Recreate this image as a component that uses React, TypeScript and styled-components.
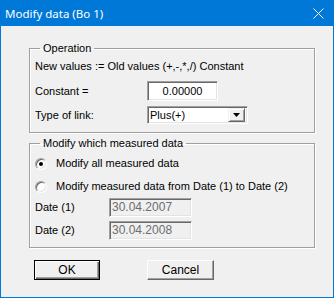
import styled, { createGlobalStyle } from "styled-components";

const Global = createGlobalStyle`
  body {
    margin: 0;
    background: #fff;
  }
`;

const Window = styled.div`
  width: 334px;
  height: 298px;
  box-sizing: border-box;
  background: #f0f0f0;
  border: 1px solid #0078d7;
  border-top: none;
  display: flex;
  flex-direction: column;
  font-family: "Liberation Sans", Arial, sans-serif;
  font-size: 11px;
  line-height: 13px;
  color: #000;
`;

const TitleBar = styled.div`
  height: 26px;
  flex: none;
  background: #0078d7;
  color: #fff;
  display: flex;
  align-items: center;
  justify-content: space-between;
  padding: 0 9px 0 4px;
  font-family: "Noto Sans", "Open Sans", sans-serif;
  font-size: 11.5px;
`;

const Body = styled.div`
  display: flex;
  flex-direction: column;
  padding: 16px 18px 0 28px;
`;

const Group = styled.fieldset<{ $top?: number; $padTop: number; $padBottom: number }>`
  margin: ${(p) => p.$top || 0}px 0 0;
  padding: ${(p) => p.$padTop}px 5px ${(p) => p.$padBottom}px;
  border: 1px solid #a0a0a0;
  box-shadow: 1px 1px 0 #fff, inset 1px 1px 0 #fff;
  min-width: 0;
  display: flex;
  flex-direction: column;
`;

const Legend = styled.legend`
  padding: 0 3px;
  margin-left: 5px;
  line-height: 13px;
`;

const Row = styled.div<{ $top?: number; $h: number }>`
  display: flex;
  align-items: center;
  height: ${(p) => p.$h}px;
  margin-top: ${(p) => p.$top || 0}px;
  white-space: nowrap;
`;

const Label = styled.span<{ $w: number }>`
  width: ${(p) => p.$w}px;
  flex: none;
`;

const Field = styled.div<{ $w: number; $h: number; $disabled?: boolean; $center?: boolean }>`
  box-sizing: border-box;
  width: ${(p) => p.$w}px;
  height: ${(p) => p.$h}px;
  border: 1px solid;
  border-color: #a0a0a0 #fff #fff #a0a0a0;
  box-shadow: inset 1px 1px 0 #696969, inset -1px -1px 0 #e3e3e3;
  background: ${(p) => (p.$disabled ? "#f0f0f0" : "#fff")};
  color: ${(p) => (p.$disabled ? "#6d6d6d" : "#000")};
  display: flex;
  align-items: center;
  justify-content: ${(p) => (p.$center ? "center" : "flex-start")};
  padding: 0 2px;
  font-size: ${(p) => (p.$disabled ? "12px" : "11px")};
`;

const Select = styled(Field)`
  justify-content: space-between;
  padding: 0 2px 0 2px;
`;

const DropButton = styled.div`
  box-sizing: border-box;
  width: 17px;
  height: 14px;
  background: #f0f0f0;
  border: 1px solid;
  border-color: #f0f0f0 #696969 #696969 #f0f0f0;
  box-shadow: inset 1px 1px 0 #fff, inset -1px -1px 0 #a0a0a0;
  display: flex;
  align-items: center;
  justify-content: center;
`;

const Radio = styled.span<{ $checked?: boolean }>`
  box-sizing: border-box;
  width: 12px;
  height: 12px;
  flex: none;
  margin-right: 9px;
  border-radius: 50%;
  border: 1px solid;
  border-color: #a0a0a0 #fff #fff #a0a0a0;
  box-shadow: inset 1px 1px 0 #696969, inset -1px -1px 0 #e3e3e3;
  background: #fff;
  display: flex;
  align-items: center;
  justify-content: center;
  &::after {
    content: "";
    width: 4px;
    height: 4px;
    border-radius: 50%;
    background: ${(p) => (p.$checked ? "#000" : "transparent")};
  }
`;

const Buttons = styled.div`
  display: flex;
  gap: 47px;
  margin: 12px 0 0 5px;
`;

const Button = styled.div<{ $default?: boolean; $w: number }>`
  box-sizing: border-box;
  width: ${(p) => p.$w}px;
  height: 20px;
  display: flex;
  align-items: center;
  justify-content: center;
  background: #f0f0f0;
  font-size: 12px;
  border: 1px solid;
  border-color: ${(p) => (p.$default ? "#000" : "#fff #696969 #696969 #fff")};
  box-shadow: ${(p) =>
    p.$default
      ? "inset 1px 1px 0 #fff, inset -1px -1px 0 #696969, inset -2px -2px 0 #a0a0a0"
      : "inset -1px -1px 0 #a0a0a0"};
`;

export default function App() {
  return (
    <>
      <Global />
      <Window>
        <TitleBar>
          <span>Modify data (Bo 1)</span>
          <svg width="11" height="11" viewBox="0 0 11 11">
            <path d="M0.5 0.5 L10.5 10.5 M10.5 0.5 L0.5 10.5" stroke="#fff" strokeWidth="1" />
          </svg>
        </TitleBar>
        <Body>
          <Group $padTop={5} $padBottom={8}>
            <Legend>Operation</Legend>
            <Row $h={13}>New values := Old values (+,-,*,/) Constant</Row>
            <Row $h={20} $top={8}>
              <Label $w={112}>Constant =</Label>
              <Field $w={71} $h={20} $center>0.00000</Field>
            </Row>
            <Row $h={18} $top={5}>
              <Label $w={112}>Type of link:</Label>
              <Select $w={101} $h={18}>
                <span>Plus(+)</span>
                <DropButton>
                  <svg width="7" height="4" viewBox="0 0 7 4">
                    <path d="M0 0 H7 L3.5 4 Z" fill="#000" />
                  </svg>
                </DropButton>
              </Select>
            </Row>
          </Group>
          <Group $top={4} $padTop={7} $padBottom={7}>
            <Legend>Modify which measured data</Legend>
            <Row $h={13}>
              <Radio $checked />
              Modify all measured data
            </Row>
            <Row $h={13} $top={10}>
              <Radio />
              Modify measured data from Date (1) to Date (2)
            </Row>
            <Row $h={19} $top={5}>
              <Label $w={74}>Date (1)</Label>
              <Field $w={83} $h={19} $disabled>30.04.2007</Field>
            </Row>
            <Row $h={19} $top={4}>
              <Label $w={74}>Date (2)</Label>
              <Field $w={83} $h={19} $disabled>30.04.2008</Field>
            </Row>
          </Group>
          <Buttons>
            <Button $default $w={66}>OK</Button>
            <Button $w={67}>Cancel</Button>
          </Buttons>
        </Body>
      </Window>
    </>
  );
}
